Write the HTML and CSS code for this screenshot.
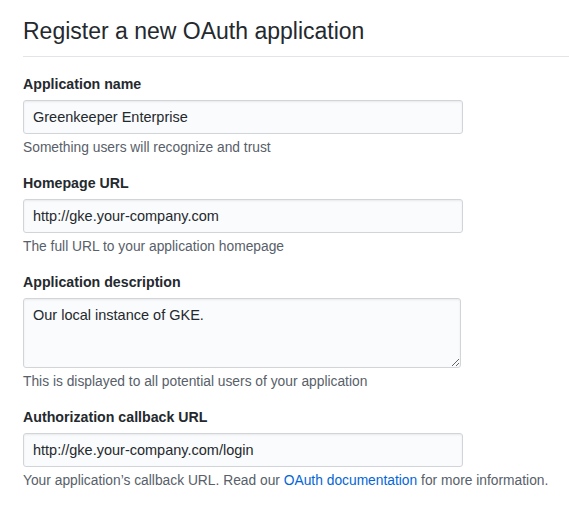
FILE: index.html
```html
<!DOCTYPE html>
<html>
<head>
<meta charset="utf-8">
<link rel="stylesheet" href="styles.css">
</head>
<body>
<div class="page">
  <h2 class="title">Register a new OAuth application</h2>
  <form class="form">
    <dl class="form-group">
      <dt><label class="label">Application name</label></dt>
      <dd>
        <input class="input" type="text" value="Greenkeeper Enterprise">
        <p class="note">Something users will recognize and trust</p>
      </dd>
    </dl>
    <dl class="form-group">
      <dt><label class="label">Homepage URL</label></dt>
      <dd>
        <input class="input" type="text" value="http://gke.your-company.com">
        <p class="note">The full URL to your application homepage</p>
      </dd>
    </dl>
    <dl class="form-group">
      <dt><label class="label">Application description</label></dt>
      <dd>
        <textarea class="input textarea">Our local instance of GKE.</textarea>
        <p class="note">This is displayed to all potential users of your application</p>
      </dd>
    </dl>
    <dl class="form-group">
      <dt><label class="label">Authorization callback URL</label></dt>
      <dd>
        <input class="input" type="text" value="http://gke.your-company.com/login">
        <p class="note">Your application’s callback URL. Read our <a class="link" href="#">OAuth documentation</a> for more information.</p>
      </dd>
    </dl>
  </form>
</div>
</body>
</html>
```
FILE: styles.css
```css
html, body {
  margin: 0;
  padding: 0;
  background: #fff;
}
body {
  font-family: "Liberation Sans", Arial, sans-serif;
  color: #24292e;
  font-size: 14px;
  line-height: 1.5;
}
.page {
  padding: 13px 0 0 23px;
}
.title {
  margin: 0;
  font-size: 23px;
  font-weight: 400;
  line-height: 36px;
  padding-bottom: 7px;
  border-bottom: 1px solid #e1e4e8;
}
.form {
  margin-top: 17px;
}
.form-group {
  margin: 0 0 15px 0;
}
.form-group dt {
  margin: 0 0 6px 0;
}
.form-group dd {
  margin: 0;
}
.label {
  font-weight: 700;
  font-size: 14.2px;
  line-height: 20px;
  display: block;
}
.input {
  display: block;
  box-sizing: border-box;
  width: 440px;
  height: 34px;
  padding: 6px 9px;
  font-family: "Liberation Sans", Arial, sans-serif;
  font-size: 14.5px;
  line-height: 20px;
  color: #24292e;
  background: #fafbfc;
  border: 1px solid #d1d5da;
  border-radius: 3px;
  box-shadow: inset 0 1px 2px rgba(27, 31, 35, 0.075);
  outline: none;
  margin: 0;
}
.textarea {
  width: 438px;
  height: 70px;
  resize: vertical;
}
.note {
  margin: 4px 0 1px 0;
  font-size: 13.8px;
  line-height: 20px;
  color: #586069;
}
.link {
  color: #0366d6;
  text-decoration: none;
}
```
